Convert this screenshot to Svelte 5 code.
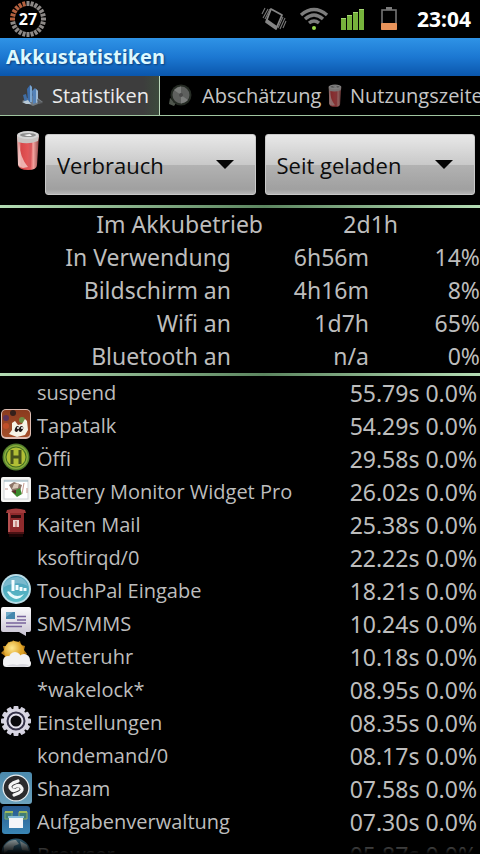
<script lang="ts">
	const tabs = [
		{ icon: 'chart', label: 'Statistiken' },
		{ icon: 'gauge', label: 'Abschätzung' },
		{ icon: 'can', label: 'Nutzungszeite' }
	];
	let active = $state(0);

	const summary = [
		{ label: 'Im Akkubetrieb', value: '2d1h', percent: '' },
		{ label: 'In Verwendung', value: '6h56m', percent: '14%' },
		{ label: 'Bildschirm an', value: '4h16m', percent: '8%' },
		{ label: 'Wifi an', value: '1d7h', percent: '65%' },
		{ label: 'Bluetooth an', value: 'n/a', percent: '0%' }
	];

	const apps = [
		{ icon: '', name: 'suspend', time: '55.79s' },
		{ icon: 'tapatalk', name: 'Tapatalk', time: '54.29s' },
		{ icon: 'oeffi', name: 'Öffi', time: '29.58s' },
		{ icon: 'monitor', name: 'Battery Monitor Widget Pro', time: '26.02s' },
		{ icon: 'mail', name: 'Kaiten Mail', time: '25.38s' },
		{ icon: '', name: 'ksoftirqd/0', time: '22.22s' },
		{ icon: 'touchpal', name: 'TouchPal Eingabe', time: '18.21s' },
		{ icon: 'sms', name: 'SMS/MMS', time: '10.24s' },
		{ icon: 'weather', name: 'Wetteruhr', time: '10.18s' },
		{ icon: '', name: '*wakelock*', time: '08.95s' },
		{ icon: 'settings', name: 'Einstellungen', time: '08.35s' },
		{ icon: '', name: 'kondemand/0', time: '08.17s' },
		{ icon: 'shazam', name: 'Shazam', time: '07.58s' },
		{ icon: 'tasks', name: 'Aufgabenverwaltung', time: '07.30s' },
		{ icon: 'browser', name: 'Browser', time: '05.87s' }
	];

	const ticks = Array.from({ length: 24 }, (_, i) => i * 15);
	const teeth = Array.from({ length: 12 }, (_, i) => i * 30);
</script>

<svelte:head>
	<title>Akkustatistiken</title>
</svelte:head>

{#snippet can()}
	<svg class="can" viewBox="0 0 24 42" aria-hidden="true">
		<defs>
			<linearGradient id="canBody">
				<stop offset="0" stop-color="#efc3c0" />
				<stop offset="0.2" stop-color="#d8484a" />
				<stop offset="0.6" stop-color="#e65a5c" />
				<stop offset="0.75" stop-color="#f0a09c" />
				<stop offset="1" stop-color="#8e4444" />
			</linearGradient>
		</defs>
		<path d="M1 5 L2 35 Q3 40 12 40 Q21 40 21 35 L23 5 Z" fill="url(#canBody)" />
		<path d="M3 12 Q4 28 12 37 L7 38 Q3 37 2 34 Z" fill="#f5dcd8" opacity="0.7" />
		<path d="M13 13 L16 12 L15 37 L12 38 Z" fill="#d8585c" />
		<path d="M1 6 L2 12 Q12 15 22 11 L23 6 Z" fill="#c9c3c1" />
		<ellipse cx="12" cy="5" rx="11" ry="4" fill="#d6d6d6" />
		<ellipse cx="12" cy="5" rx="8" ry="2" fill="#8e8e8e" />
		<path d="M8 5 L14 4 L16 6 L11 6 Z" fill="#f7f7f7" />
	</svg>
{/snippet}

{#snippet appIcon(name: string)}
	<svg viewBox="0 0 32 32" aria-hidden="true">
		{#if name === 'tapatalk'}
			<defs>
				<linearGradient id="tapa" x2="0" y2="1">
					<stop offset="0" stop-color="#8a3b1e" />
					<stop offset="1" stop-color="#a44f2a" />
				</linearGradient>
			</defs>
			<rect x="1" y="0" width="30" height="30" rx="5" fill="#ddbdb2" />
			<rect x="2" y="1" width="28" height="27" rx="4" fill="url(#tapa)" />
			<circle cx="6" cy="9" r="3" fill="#5c3158" />
			<circle cx="13" cy="4" r="3" fill="#34201b" />
			<circle cx="22" cy="11" r="3" fill="#6f9144" />
			<circle cx="6" cy="17" r="3" fill="#c04e28" />
			<path d="M12 14 L15 12 L18 16 L22 15 L25 10 L27 12 L28 21 L25 26 L17 28 L9 25 L12 21 Z" fill="#f6f4e6" />
			<ellipse cx="17" cy="20" rx="2" ry="3" fill="#211a18" transform="rotate(25 17 20)" />
			<ellipse cx="21" cy="20" rx="2" ry="3" fill="#211a18" transform="rotate(25 21 20)" />
			<circle cx="18" cy="19" r="1" fill="#fff" />
			<circle cx="22" cy="19" r="1" fill="#fff" />
		{:else if name === 'oeffi'}
			<circle cx="16" cy="15" r="13.5" fill="#55812e" />
			<circle cx="16" cy="15" r="12" fill="#88ab3a" />
			<circle cx="16" cy="15" r="10.5" fill="#3f6b20" />
			<circle cx="16" cy="15" r="9.5" fill="#b1be35" />
			<path d="M12 8 V22 M20 8 V22 M12 15 H20" stroke="#46521c" stroke-width="3" fill="none" />
		{:else if name === 'monitor'}
			<rect x="1" y="2" width="30" height="25" rx="2" fill="#f4f4f2" />
			<rect x="4" y="5" width="24" height="19" fill="#fff" stroke="#cfd3d6" />
			<path d="M4 6 H28" stroke="#8dabb8" />
			<path d="M9 10 L14 7 L22 10 L20 16 L13 17 Z" fill="#8c7468" />
			<path d="M14 9 L19 8 L18 13 L12 14 Z" fill="#d9c9b9" />
			<path d="M12 17 L20 13 L22 19 L17 22 Z" fill="#3c8a2e" />
			<path d="M11 16 L16 15 L16 19 Z" fill="#5c2b28" />
			<path d="M24 8 L22 19 M5 14 H8 M27 13 V18" stroke="#c79a8e" />
		{:else if name === 'mail'}
			<path d="M7 2 Q16 -1 25 2 L26 5 H6 Z" fill="#a33b3c" />
			<path d="M8 5 H24 V24 H8 Z" fill="#8e2a2c" />
			<path d="M8 5 H10 V24 H8 Z" fill="#b55050" />
			<rect x="11" y="7" width="10" height="3" fill="#2c0d0e" />
			<rect x="13" y="12" width="6" height="7" fill="#e9d4cf" />
			<path d="M15 14 H17 M15 16 H17 M15 18 H17" stroke="#b24a44" />
			<path d="M8 24 H24 V26 H8 Z" fill="#4a1214" />
			<path d="M9 26 H23 V29 H9 Z" fill="#1c0506" />
		{:else if name === 'touchpal'}
			<defs>
				<linearGradient id="touch" x2="0" y2="1">
					<stop offset="0" stop-color="#4c9dbb" />
					<stop offset="1" stop-color="#58bcc6" />
				</linearGradient>
			</defs>
			<circle cx="16" cy="15" r="15" fill="#b9dce6" />
			<circle cx="16" cy="15" r="13" fill="url(#touch)" />
			<path d="M4 10 Q9 2 18 3 Q25 4 28 12 Q18 6 4 13 Z" fill="#79b9cd" />
			<path d="M13 6 V17 M17 11 V16 M21 13 V17 M25 14 V17" stroke="#f3fdff" stroke-width="3" />
			<path d="M7 18 Q9 16 12 20 Q17 24 24 20 Q19 27 13 24 Q9 22 7 18 Z" fill="#e8fafc" />
		{:else if name === 'sms'}
			<defs>
				<linearGradient id="sms" x2="0" y2="1">
					<stop offset="0" stop-color="#fafafc" />
					<stop offset="1" stop-color="#c8c3d2" />
				</linearGradient>
			</defs>
			<path d="M3 0 H29 Q31 0 31 2 V23 Q31 25 29 25 H26 V29 L19 25 H3 Q1 25 1 23 V2 Q1 0 3 0 Z" fill="url(#sms)" />
			<rect x="6" y="5" width="9" height="7" fill="#4587ad" />
			<path d="M6 5 H13 L6 10 Z" fill="#73aac8" />
			<path d="M17 9.5 H26 M17 13 H26 M6 16 H26 M6 19.5 H22" stroke="#78649c" stroke-width="1.4" />
		{:else if name === 'weather'}
			<defs>
				<radialGradient id="sun" cx="0.4" cy="0.35">
					<stop offset="0" stop-color="#ffe890" />
					<stop offset="1" stop-color="#dda023" />
				</radialGradient>
			</defs>
			<path d="M13 0 L16 3 L20 1 L21 5 L25 6 L24 10 L27 14 L23 16 L4 20 L5 16 L1 13 L4 10 L3 6 L7 6 L8 2 L12 3 Z" fill="#bb801c" />
			<circle cx="14" cy="11" r="10" fill="url(#sun)" />
			<g fill="#f2f2f4">
				<circle cx="8" cy="21" r="5" />
				<circle cx="15" cy="18" r="6" />
				<circle cx="24" cy="20" r="6" />
				<rect x="3" y="20" width="28" height="7" rx="3.5" />
			</g>
			<path d="M6 26 Q12 23 17 25 Q22 23 29 25 Q27 27 22 27 Z" fill="#d8d8de" />
		{:else if name === 'settings'}
			<g transform="translate(16 15)">
				{#each teeth as angle}
					<rect x="-2.5" y="-15" width="5" height="6" rx="1" fill="#d3d1df" transform="rotate({angle})" />
				{/each}
				<circle r="12.5" fill="#d9d7e4" />
				<circle r="8.5" fill="#e4e2ee" stroke="#343148" stroke-width="2" />
				<circle r="5.5" fill="#08080c" />
			</g>
		{:else if name === 'shazam'}
			<defs>
				<linearGradient id="shaz" x2="0" y2="1">
					<stop offset="0" stop-color="#4b89ac" />
					<stop offset="1" stop-color="#6ca2bd" />
				</linearGradient>
			</defs>
			<rect width="32" height="32" rx="3" fill="url(#shaz)" />
			<circle cx="16" cy="16" r="13.5" fill="#e9eef0" />
			<circle cx="16" cy="16" r="12.3" fill="#2b2b2d" />
			<path d="M18 9 L13 11 Q8 14 11 17 Q13 20 18 17" fill="none" stroke="#f5f5f5" stroke-width="3.2" stroke-linecap="round" />
			<path d="M14 23 L19 21 Q24 18 21 15 Q19 12 14 15" fill="none" stroke="#f5f5f5" stroke-width="3.2" stroke-linecap="round" />
		{:else if name === 'tasks'}
			<defs>
				<linearGradient id="task" x2="0" y2="1">
					<stop offset="0" stop-color="#27588d" />
					<stop offset="1" stop-color="#3a86b5" />
				</linearGradient>
			</defs>
			<rect x="2" y="1" width="28" height="28" rx="3" fill="url(#task)" />
			<path d="M5 7 H12 V14 H5 Z" fill="#3f7d78" stroke="#78ab6a" />
			<path d="M19 7 H27 V14 H19 Z" fill="#3f7d78" stroke="#9bb05a" />
			<path d="M5 7 H13 M19 7 H27" stroke="#9dba5b" stroke-width="2" />
			<path d="M9 12 H23 V23 H9 Z" fill="#f3f5f8" />
			<path d="M8 12 H24" stroke="#86bbd8" stroke-width="2" />
		{:else if name === 'browser'}
			<circle cx="16" cy="15" r="14.5" fill="#39718d" />
			<path d="M4 8 Q9 1 16 2 L19 6 L14 8 L13 12 L8 12 L4 16 Z M20 3 L27 7 L29 13 L22 12 Z" fill="#b7c8cc" />
		{/if}
	</svg>
{/snippet}

<div class="screen">
	<header class="status-bar">
		<svg class="ring" viewBox="0 0 38 38" role="img" aria-label="27">
			{#each ticks as angle}
				<rect x="17.5" y="1" width="3" height="5" fill={angle > 255 ? '#b5613f' : '#8d8987'} transform="rotate({angle} 19 19)" />
			{/each}
			<text x="19" y="25" text-anchor="middle">27</text>
		</svg>
		<div class="status-icons">
			<svg width="26" height="24" viewBox="0 0 26 24" aria-hidden="true">
				<path d="M10 2 L21 8 L15 22 L5 15 Z" fill="none" stroke="#858585" stroke-width="1.8" stroke-linejoin="round" />
				<path d="M5 15 L15 22 L16 19 L6 12 Z" fill="#858585" />
				<path d="M4 1 L1 7 M7 2 L2 11 M9 2 L4 12 M25 14 L22 21 M24 11 L19 22 M22 10 L17 21" stroke="#777" stroke-width="1.1" />
			</svg>
			<svg width="30" height="24" viewBox="0 0 30 24" aria-hidden="true">
				<g fill="none" stroke="#7c7c7c" stroke-width="3.4">
					<path d="M2 8 Q15 -3 28 8" />
					<path d="M6 12 Q15 4 24 12" />
					<path d="M10 16 Q15 12 20 16" />
				</g>
				<circle cx="15" cy="21" r="2" fill="#9ad84c" />
			</svg>
			<svg class="signal" width="24" height="24" viewBox="0 0 24 24" aria-hidden="true">
				<path d="M0 11 H5 V23 H0 Z M6 8 H11 V23 H6 Z M12 5 H17 V23 H12 Z M18 2 H23 V23 H18 Z" fill="#76b33c" />
				<path d="M0 11 H5 V12 H0 Z M6 8 H11 V9 H6 Z M12 5 H17 V6 H12 Z M18 2 H23 V3 H18 Z" fill="#a4d673" />
			</svg>
			<svg width="16" height="24" viewBox="0 0 16 24" aria-hidden="true">
				<path d="M5 0 H11 V3 H5 Z" fill="#7b7b7b" />
				<rect x="1" y="3" width="14" height="19" fill="none" stroke="#747474" stroke-width="1.6" />
				<rect x="0" y="16" width="16" height="7" rx="1" fill="#e8935a" />
			</svg>
		</div>
		<span class="clock">23:04</span>
	</header>

	<h1>Akkustatistiken</h1>

	<nav>
		{#each tabs as tab, i}
			<button class="tab" class:active={active === i} onclick={() => (active = i)}>
				{#if tab.icon === 'chart'}
					<svg width="24" height="24" viewBox="0 0 24 24" aria-hidden="true">
						<path d="M2 17 L14 11 L23 18 L13 22 Z" fill="#a9b7c4" opacity="0.5" />
						<path d="M3 11 L6 10 L8 18 L5 19 Z" fill="#3f6da4" />
						<path d="M7 5 L10 1 L12 3 L12 18 L8 19 Z" fill="#3b6ba8" />
						<path d="M10 1 L12 3 L12 18 L10 18 Z" fill="#7ba6d0" />
						<path d="M12 7 L15 4 L18 7 L18 18 L13 20 Z" fill="#5482b8" />
						<path d="M16 5 L18 7 L18 18 L16 19 Z" fill="#9db9d4" />
						<path d="M2 18 L8 16 L11 20 L6 20 Z" fill="#b7c8d6" />
						<path d="M17 15 L23 19 L18 20 Z" fill="#5a5d60" />
					</svg>
				{:else if tab.icon === 'gauge'}
					<svg width="24" height="24" viewBox="0 0 24 24" aria-hidden="true">
						<path d="M2 14 L8 19 L6 22 L1 20 Z" fill="#4e554c" />
						<circle cx="13" cy="11" r="10.5" fill="#252b24" />
						<circle cx="13" cy="11" r="8.5" fill="#5e605e" />
						<path d="M13 11 L6 6 Q9 3 13 2.5 Z M13 11 L20 16 Q17 19 13 19.5 Z" fill="#7c7e7c" />
						<circle cx="13" cy="11" r="2" fill="#4a4a4a" />
					</svg>
				{:else}
					{@render can()}
				{/if}
				<span>{tab.label}</span>
			</button>
		{/each}
	</nav>

	<div class="filters">
		{@render can()}
		<div class="spinner">
			<select aria-label="Statistik">
				<option>Verbrauch</option>
			</select>
			<svg width="18" height="9" viewBox="0 0 18 9" aria-hidden="true"><path d="M0 0 H18 L9 9 Z" fill="#050505" /></svg>
		</div>
		<div class="spinner">
			<select aria-label="Zeitraum">
				<option>Seit geladen</option>
			</select>
			<svg width="18" height="9" viewBox="0 0 18 9" aria-hidden="true"><path d="M0 0 H18 L9 9 Z" fill="#050505" /></svg>
		</div>
	</div>

	<div class="line"></div>
	<table class="summary">
		<tbody>
			{#each summary as row}
				<tr class:total={!row.percent}>
					<th scope="row">{row.label}</th>
					<td>{row.value}</td>
					<td>{row.percent}</td>
				</tr>
			{/each}
		</tbody>
	</table>
	<div class="line"></div>

	<main>
		<table class="apps">
			<tbody>
				{#each apps as app}
					<tr>
						<td class="icon">{@render appIcon(app.icon)}</td>
						<th scope="row">{app.name}</th>
						<td class="usage">{app.time} 0.0%</td>
					</tr>
				{/each}
			</tbody>
		</table>
	</main>
</div>

<style>
	:global(body) {
		margin: 0;
		background: #000;
	}

	.screen {
		display: flex;
		flex-direction: column;
		height: 100vh;
		overflow: hidden;
		background: #000;
		color: #bdbdbd;
		font-family: 'Noto Sans', 'Open Sans', sans-serif;
	}

	svg {
		display: block;
		flex-shrink: 0;
	}

	.status-bar {
		display: flex;
		align-items: center;
		flex-shrink: 0;
		height: 38px;
		padding: 0 9px;
	}

	.ring {
		width: 38px;
		height: 38px;
		margin-right: auto;
	}

	.ring text {
		fill: #fff;
		font-size: 16px;
		font-weight: 700;
	}

	.status-icons {
		display: flex;
		align-items: center;
		gap: 12px;
		margin-right: 20px;
	}

	.signal {
		margin-right: 4px;
	}

	.clock {
		color: #fff;
		font-size: 21px;
		font-weight: 700;
	}

	h1 {
		flex-shrink: 0;
		margin: 0;
		padding: 0 6px;
		background: linear-gradient(#2f93e6, #1c78d2 50%, #0a56ac);
		color: #dcf8ff;
		font-size: 20px;
		line-height: 38px;
		text-shadow: 1px 1px 2px #0a3c78;
	}

	nav {
		display: grid;
		grid-template-columns: repeat(3, minmax(0, 1fr));
		flex-shrink: 0;
		height: 39px;
		overflow: hidden;
		border-bottom: 1px solid #9fc49f;
	}

	.tab {
		display: flex;
		align-items: center;
		gap: 8px;
		padding: 0 0 0 8px;
		border: 0;
		background: none;
		color: #c6c6c6;
		font-family: 'Open Sans', 'Noto Sans', sans-serif;
		font-size: 20px;
		white-space: nowrap;
	}

	.tab:first-child {
		padding-left: 20px;
	}

	.tab:nth-child(2) {
		gap: 10px;
	}

	.tab.active {
		background: linear-gradient(90deg, #3d3d3d 90%, #3c4a3c);
		border-right: 1px solid #bcd8bc;
		color: #ececec;
	}

	.tab .can {
		width: 14px;
		height: 24px;
		opacity: 0.6;
	}

	.filters {
		display: flex;
		align-items: center;
		gap: 9px;
		flex-shrink: 0;
		height: 89px;
		padding: 8px 5px 0 16px;
		box-sizing: border-box;
	}

	.filters .can {
		width: 24px;
		height: 42px;
		margin: 0 -4px 28px 0;
	}

	.spinner {
		display: grid;
		align-items: center;
		flex: 1;
	}

	.spinner select,
	.spinner svg {
		grid-area: 1 / 1;
	}

	.spinner svg {
		justify-self: end;
		margin-right: 22px;
		pointer-events: none;
	}

	select {
		appearance: none;
		width: 100%;
		height: 61px;
		padding: 0 48px 0 11px;
		border: 1px solid #c9c9c9;
		border-radius: 3px;
		background: linear-gradient(#e8e8e8, #c9c9c9 50%, #b2b2b2 51%, #a0a0a0 92%, #b5b5b5);
		color: #0c0c0c;
		font-family: 'Open Sans', 'Noto Sans', sans-serif;
		font-size: 22px;
	}

	.line {
		flex-shrink: 0;
		height: 3px;
		background: linear-gradient(90deg, #b4dcb4, #5c8660 55%, #b4dcb4);
	}

	table {
		width: 100%;
		border-collapse: collapse;
	}

	th {
		font-weight: 400;
	}

	.summary tbody,
	.summary {
		display: block;
		flex-shrink: 0;
	}

	.summary tr {
		display: grid;
		grid-template-columns: 231fr 138fr 111fr;
		font-size: 23px;
		line-height: 33px;
		text-align: right;
	}

	.summary tr.total {
		grid-template-columns: 263fr 135fr 82fr;
	}

	.summary th,
	.summary td {
		padding: 0;
	}

	main {
		position: relative;
		flex: 1;
		min-height: 0;
		overflow: hidden;
	}

	main::after {
		content: '';
		position: absolute;
		inset: auto 0 0;
		height: 20px;
		background: linear-gradient(transparent, #000);
	}

	.apps tr {
		height: 33px;
	}

	.apps th,
	.apps td {
		padding: 1px 0 0;
		line-height: 32px;
	}

	.apps th {
		font-family: 'Open Sans', 'Noto Sans', sans-serif;
		font-size: 20px;
		text-align: left;
	}

	.apps .icon {
		width: 37px;
		padding: 0;
		vertical-align: top;
	}

	.icon svg {
		width: 32px;
		height: 32px;
	}

	.apps .usage {
		padding-right: 3px;
		font-size: 23px;
		text-align: right;
		white-space: nowrap;
	}
</style>
